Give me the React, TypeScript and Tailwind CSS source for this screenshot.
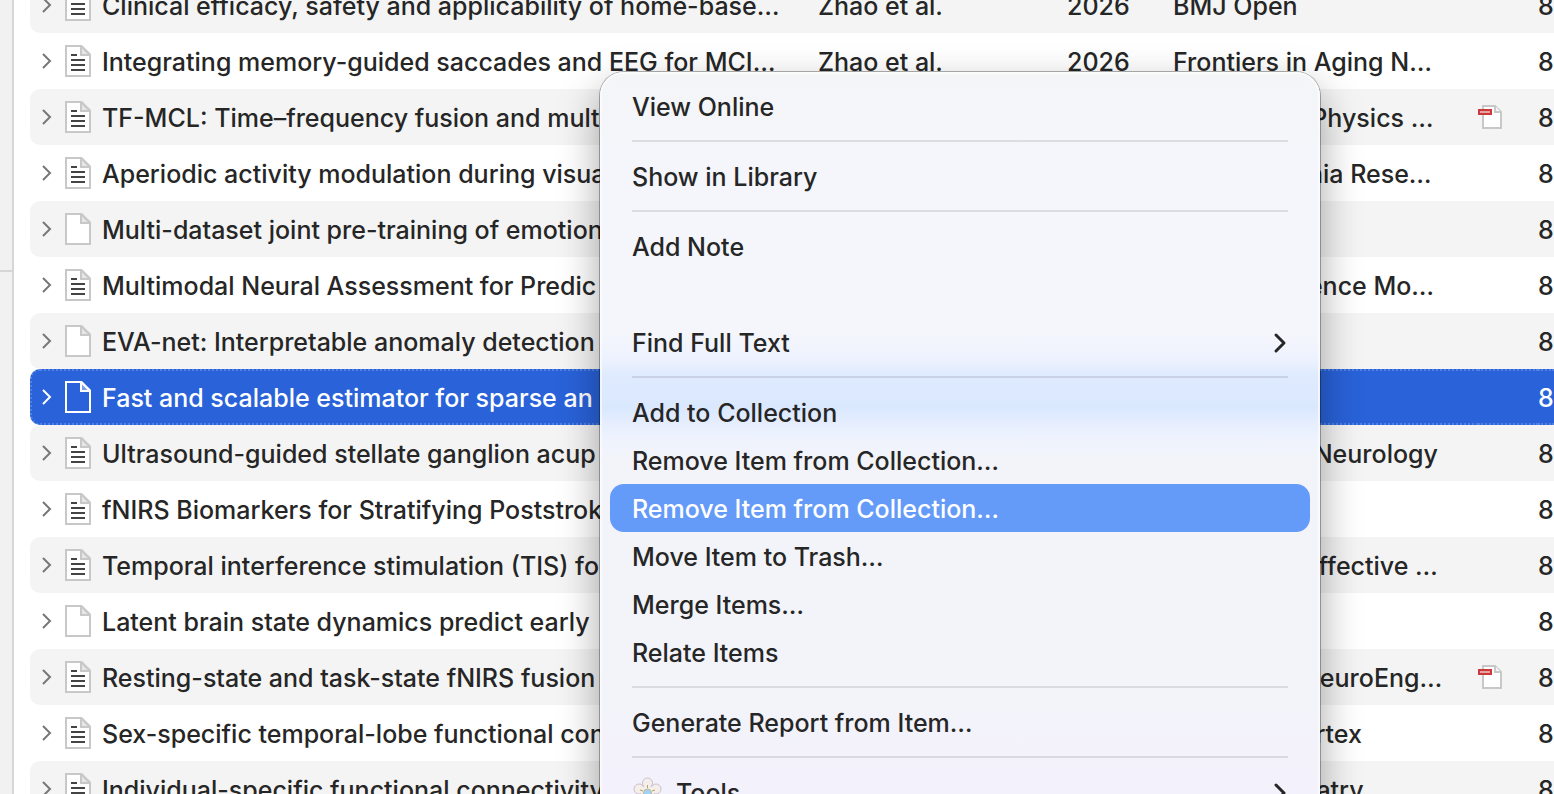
import React from 'react';

interface Item {
  title: string;
  creator: string;
  publication: string;
  kind: 'article' | 'preprint';
  hasPdf?: boolean;
  selected?: boolean;
}

const items: Item[] = [
  { title: 'Clinical efficacy, safety and applicability of home-base…', creator: 'Zhao et al.', publication: 'BMJ Open', kind: 'article' },
  { title: 'Integrating memory-guided saccades and EEG for MCI…', creator: 'Zhao et al.', publication: 'Frontiers in Aging N…', kind: 'article' },
  { title: 'TF-MCL: Time–frequency fusion and mult', creator: 'Zhao et al.', publication: 'Biomedical Physics …', kind: 'article', hasPdf: true },
  { title: 'Aperiodic activity modulation during visua', creator: 'Zhang et al.', publication: 'Schizophrenia Rese…', kind: 'article' },
  { title: 'Multi-dataset joint pre-training of emotion', creator: 'Zhang et al.', publication: '', kind: 'preprint' },
  { title: 'Multimodal Neural Assessment for Predic', creator: 'Yang et al.', publication: 'Applied Science Mo…', kind: 'article' },
  { title: 'EVA-net: Interpretable anomaly detection', creator: 'Yang et al.', publication: '', kind: 'preprint' },
  { title: 'Fast and scalable estimator for sparse an', creator: 'Xu et al.', publication: '', kind: 'preprint', selected: true },
  { title: 'Ultrasound-guided stellate ganglion acup', creator: 'Xu et al.', publication: 'Frontiers in Neurology', kind: 'article' },
  { title: 'fNIRS Biomarkers for Stratifying Poststrok', creator: 'Wang et al.', publication: '', kind: 'article' },
  { title: 'Temporal interference stimulation (TIS) fo', creator: 'Wang et al.', publication: 'Journal of Affective …', kind: 'article' },
  { title: 'Latent brain state dynamics predict early', creator: 'Wang et al.', publication: '', kind: 'preprint' },
  { title: 'Resting-state and task-state fNIRS fusion', creator: 'Sun et al.', publication: 'Journal of NeuroEng…', kind: 'article', hasPdf: true },
  { title: 'Sex-specific temporal-lobe functional con', creator: 'Shi et al.', publication: 'Cerebral Cortex', kind: 'article' },
  { title: 'Individual-specific functional connectivity', creator: 'Ren et al.', publication: 'BMC Psychiatry', kind: 'article' },
];

const ItemIcon: React.FC<{ kind: Item['kind']; selected?: boolean }> = ({ kind, selected }) => (
  <svg width="26" height="32" viewBox="0 0 26 32" fill="none" className="shrink-0">
    <path
      d="M1 1H16.5L25 9.5V31H1Z"
      fill={selected ? 'none' : '#fff'}
      stroke={selected ? '#fff' : '#c8c8c8'}
      strokeWidth="2"
    />
    <path
      d="M16 1V10H25Z"
      fill={selected ? '#7d9fe8' : '#e6e6e6'}
      stroke={selected ? '#fff' : '#c8c8c8'}
      strokeWidth="2"
    />
    {kind === 'article' && <path d="M6 10H12M6 15H20M6 20H20M6 25H20" stroke="#444" strokeWidth="2" />}
  </svg>
);

const PdfIcon = () => (
  <svg width="24" height="24" viewBox="0 0 24 24" fill="none" className="block">
    <path d="M5 1H17L23 7V23H5Z" fill="#fff" stroke="#c8c8c8" strokeWidth="2" />
    <path d="M17 1V7H23" fill="#f4f4f4" stroke="#c8c8c8" strokeWidth="2" />
    <path d="M1 5H13V9H1Z" fill="#e9a3a5" stroke="#cc393d" strokeWidth="2" />
  </svg>
);

const ToolsIcon = () => (
  <svg width="30" height="30" viewBox="0 0 30 30" className="shrink-0">
    <g fill="#f5efe9" stroke="#cdbfd0" strokeWidth="1">
      <circle cx="7" cy="12" r="5" />
      <circle cx="24" cy="12" r="5" />
      <circle cx="21" cy="22" r="5" />
      <circle cx="10" cy="22" r="5" />
      <circle cx="15.5" cy="6" r="5" />
    </g>
    <circle cx="15.5" cy="15" r="6.5" fill="#f5efe9" />
    <path d="M15.5 8V11M8 13L11 14M23 13L20 14M11 22L12 20M20 22L19 20" stroke="#b9a06c" strokeWidth="1" />
    <circle cx="15.5" cy="16" r="4" fill="#9dd3fa" stroke="#c9b78e" strokeWidth="1" />
  </svg>
);

const ItemRow: React.FC<{ item: Item; striped: boolean }> = ({ item, striped }) => {
  const base = item.selected
    ? 'h-14 p-0 border-y-2 border-dotted border-[#4f80e2] bg-[#2962d9] font-medium text-white'
    : striped
      ? 'h-14 p-0 bg-[#f4f4f4]'
      : 'h-14 p-0';

  return (
    <tr aria-selected={item.selected}>
      <td className={`${base} rounded-l-[10px] ${item.selected ? 'border-l-2 pl-[9px]' : 'pl-[11px]'}`}>
        <div className="flex items-center">
          <button type="button" aria-label="Expand item" className="mr-3 block">
            <svg width="12" height="18" viewBox="0 0 12 18" fill="none">
              <path d="M2 2L9 9L2 16" stroke={item.selected ? '#fff' : '#777'} strokeWidth="2" />
            </svg>
          </button>
          <ItemIcon kind={item.kind} selected={item.selected} />
          <span className="ml-[11px] pt-[2px]">{item.title}</span>
        </div>
      </td>
      <td className={`${base} pt-[2px]`}>{item.creator}</td>
      <td className={`${base} pt-[2px]`}>2026</td>
      <td className={`${base} pt-[2px]`}>{item.publication}</td>
      <td className={base}>{item.hasPdf && <PdfIcon />}</td>
      <td className={`${base} pt-[2px]`}>8</td>
    </tr>
  );
};

const MenuItem: React.FC<{
  label: string;
  icon?: React.ReactNode;
  submenu?: boolean;
  active?: boolean;
}> = ({ label, icon, submenu, active }) => (
  <button
    type="button"
    role="menuitem"
    className={
      active
        ? 'flex h-12 w-full items-center rounded-[14px] bg-[#649bf8] px-[22px] text-left font-medium text-white'
        : 'flex h-12 w-full items-center rounded-[14px] px-[22px] text-left'
    }
  >
    {icon && <span className="mr-[14px]">{icon}</span>}
    <span className="flex-1 pt-[2px]">{label}</span>
    {submenu && (
      <svg width="16" height="24" viewBox="0 0 16 24" fill="none">
        <path d="M4 5L12 13L4 21" stroke="#262626" strokeWidth="3" strokeLinecap="round" strokeLinejoin="round" />
      </svg>
    )}
  </button>
);

const Separator = () => (
  <div role="separator" className="px-[22px] py-[10px]">
    <div className="h-[2px] bg-black/10" />
  </div>
);

const ContextMenu = () => (
  <div
    role="menu"
    className="absolute top-[72px] left-[600px] w-[720px] rounded-[24px] bg-[linear-gradient(180deg,#f4f5f7_0px,#f4f6fb_80px,#f4f6fb_260px,#eff3fe_284px,#dfeafe_304px,#dae8fe_336px,#e6eefe_352px,#eff3fd_368px,#f3f4f9_392px,#f3f4fa_600px,#f3f1fb_722px)] p-[10px] shadow-[0_0_0_1px_rgba(0,0,0,0.3),inset_0_0_0_2px_rgba(255,255,255,0.6),0_16px_40px_rgba(0,0,0,0.36)]"
  >
    <MenuItem label="View Online" />
    <Separator />
    <MenuItem label="Show in Library" />
    <Separator />
    <MenuItem label="Add Note" />
    <div className="h-12" />
    <MenuItem label="Find Full Text" submenu />
    <Separator />
    <MenuItem label="Add to Collection" />
    <MenuItem label="Remove Item from Collection…" />
    <MenuItem label="Remove Item from Collection…" active />
    <MenuItem label="Move Item to Trash…" />
    <MenuItem label="Merge Items…" />
    <MenuItem label="Relate Items" />
    <Separator />
    <MenuItem label="Generate Report from Item…" />
    <Separator />
    <MenuItem label="Tools" icon={<ToolsIcon />} submenu />
  </div>
);

export default function App() {
  return (
    <div className="relative flex h-screen overflow-hidden bg-white font-['Inter',sans-serif] text-[25px] leading-8 font-[450] text-[#262626]">
      <aside className="w-[14px] shrink-0 border-r-2 border-[#d6d6d6] bg-[#f1f1f1]">
        <div className="h-[272px] border-b-2 border-[#d6d6d6]" />
      </aside>

      <main className="min-w-0 flex-1 overflow-hidden pl-4">
        {/* list is scrolled part of a row down */}
        <table className="-mt-[23px] w-full table-fixed border-separate border-spacing-0 whitespace-nowrap">
          <colgroup>
            <col />
            <col className="w-[249px]" />
            <col className="w-[106px]" />
            <col className="w-[305px]" />
            <col className="w-[60px]" />
            <col className="w-[16px]" />
          </colgroup>
          <tbody>
            {items.map((item, index) => (
              <ItemRow key={item.title} item={item} striped={index % 2 === 0} />
            ))}
          </tbody>
        </table>
      </main>

      <ContextMenu />
    </div>
  );
}
